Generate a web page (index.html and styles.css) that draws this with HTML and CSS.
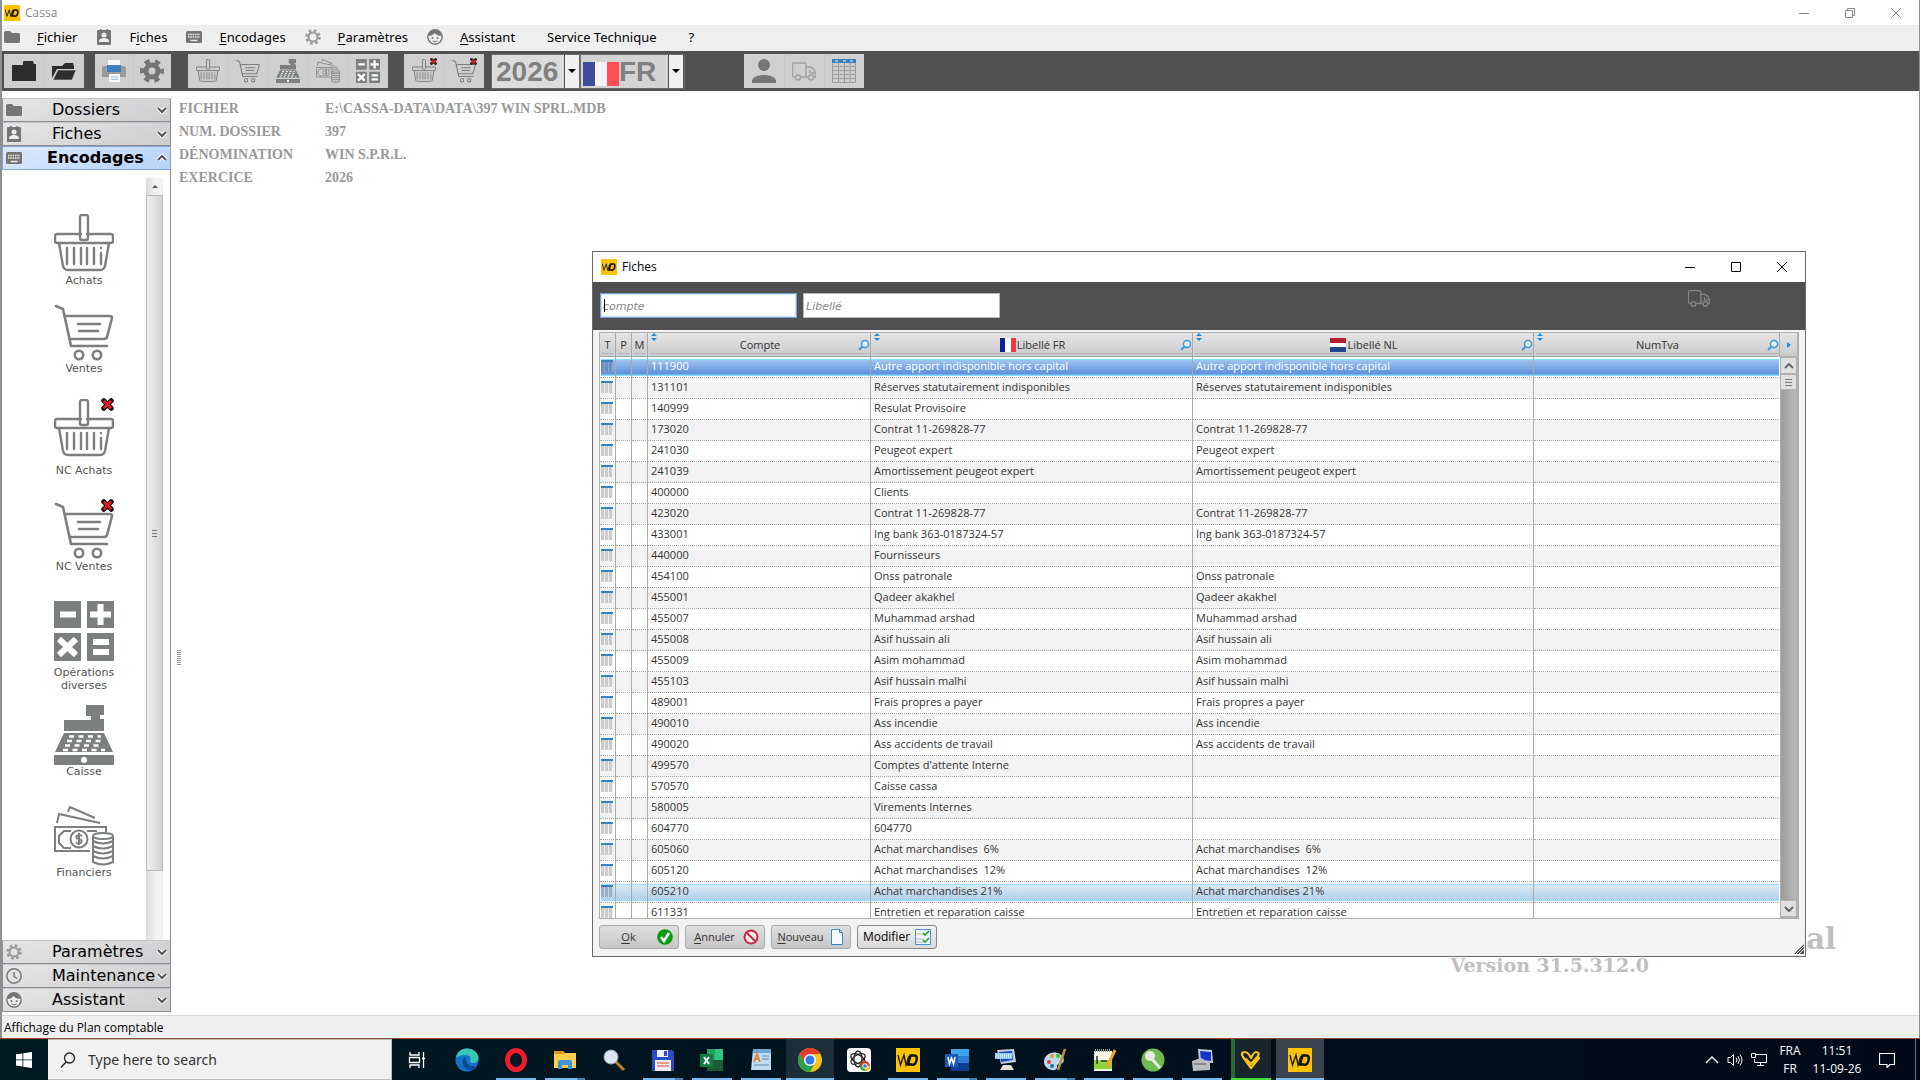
FILE: index.html
```html
<!DOCTYPE html>
<html lang="fr">
<head>
<meta charset="utf-8">
<title>Cassa</title>
<link rel="stylesheet" href="styles.css">
</head>
<body>
<svg class="defs" aria-hidden="true">
  <symbol id="folder" viewBox="0 0 16 16"><path d="M0 3.500a1.500 1.500 0 0 1 1.500-1.500h4.500l2 2h6.500a1.500 1.500 0 0 1 1.500 1.500v7a1.500 1.500 0 0 1-1.500 1.500h-13a1.500 1.500 0 0 1-1.500-1.500z" fill="#757575"/></symbol>
  <symbol id="contact" viewBox="0 0 16 16"><path d="M2 1h2v-1h1.500v1h5v-1h1.500v1h2a1 1 0 0 1 1 1v13a1 1 0 0 1-1 1h-12a1 1 0 0 1-1-1v-13a1 1 0 0 1 1-1z" fill="#757575"/><circle cx="8" cy="6" r="2.500" fill="#eee"/><path d="M3 13v-1c0-2 3-3 5-3s5 1 5 3v1z" fill="#eee"/></symbol>
  <symbol id="keyboard" viewBox="0 0 16 16"><rect y="2" width="16" height="12" rx="1.500" fill="#757575"/><path d="M2 5.500h12M2 8h12" stroke="#eee" stroke-width="1.500" stroke-dasharray="1.500 .8"/><path d="M4.500 11.500h7" stroke="#eee" stroke-width="1.500"/></symbol>
  <symbol id="cog" viewBox="0 0 16 16"><circle cx="8" cy="8" r="4.500" fill="none" stroke="#9a9a9a" stroke-width="2"/><circle cx="8" cy="8" r="6.500" fill="none" stroke="#9a9a9a" stroke-width="2.600" stroke-dasharray="2.600 2.500"/></symbol>
  <symbol id="face" viewBox="0 0 16 16"><circle cx="8" cy="8" r="7.200" fill="#eee" stroke="#757575" stroke-width="1.400"/><path d="M1.500 7c3 0 5-1.500 6-3 1.500 2 4 3 7 3l-1.500-4-5-2.500-5 2z" fill="#757575"/><circle cx="5.500" cy="9" r="1" fill="#757575"/><circle cx="10.500" cy="9" r="1" fill="#757575"/><path d="M5.500 12q2.500 1.500 5 0" stroke="#757575" fill="none"/></symbol>
  <symbol id="clock" viewBox="0 0 16 16"><circle cx="8" cy="8" r="7.200" fill="none" stroke="#757575" stroke-width="1.500"/><path d="M8 4v4.500l3 2" fill="none" stroke="#757575" stroke-width="1.500"/></symbol>
  <symbol id="basket" viewBox="0 0 60 60"><g fill="none" stroke="#7b807e" stroke-width="2.400" stroke-linejoin="round" stroke-linecap="round"><path d="M27 20h-24q-2 0-2 2v5q0 2 2 2h54q2 0 2-2v-5q0-2-2-2h-24"/><rect x="26" y="1" width="8" height="25" rx="2"/><path d="M5 29l4 23q1 4 5 4h32q4 0 5-4l4-23M13 34v16M20 34v16M27 34v16M33 34v16M40 34v16M47 39v11M47 34v.1"/></g></symbol>
  <symbol id="cart" viewBox="0 0 60 60"><g fill="none" stroke="#7b807e" stroke-width="2.600" stroke-linejoin="round" stroke-linecap="round"><path d="M2 4l7 3 8 37h36M11 14h45q2 0 2 2l-5 19q-.5 2-3 2H16M24 22h22M25 29h19"/><circle cx="25" cy="53" r="4.200"/><circle cx="43" cy="53" r="4.200"/></g></symbol>
  <symbol id="redx" viewBox="0 0 14 14"><path d="M3 3l8 8M11 3l-8 8" stroke="#111" stroke-width="5.500" stroke-linecap="round"/><path d="M3 3l8 8M11 3l-8 8" stroke="#e01b22" stroke-width="3"/></symbol>
  <symbol id="calc" viewBox="0 0 60 60"><path d="M0 0h27v27H0zM33 0h27v27H33zM0 32h27v28H0zM33 32h27v28H33z" fill="#7b807e"/><path d="M6 13.500h16M36 13.500h21M46.500 3v21M5 38l17 16M22 38l-17 16M39 41h16M39 51h16" stroke="#fff" stroke-width="6"/></symbol>
  <symbol id="register" viewBox="0 0 60 60"><path d="M32 0h18v10h-4v4h4v12H10V15h27v-4h-5zM10 28h40l9 19H1zM0 50h60v10H0z" fill="#7b807e"/><path d="M15 31.500h32M13 36h35M11 40.500h38M9 45h42" stroke="#fff" stroke-width="2.400" stroke-dasharray="5 4.500"/><circle cx="30" cy="55" r="3" fill="#fff"/></symbol>
  <symbol id="money" viewBox="0 0 60 60"><g fill="none" stroke="#7b807e" stroke-width="2"><path d="M3 17l2-9 41 9M14 6l2-5 25 11M52 26v-5H1v24h35M17 25h-7l-5 5v7l5 5h7M33 25h10"/><circle cx="25" cy="33" r="8.500"/><path d="M28 30q-3-2-5 0t2 3 2 3.500-5 0M25 27v12"/><ellipse cx="49" cy="30" rx="10" ry="3"/><path d="M39 30v26q10 5 20 0V30M39 35q10 5 20 0M39 40q10 5 20 0M39 45q10 5 20 0M39 50q10 5 20 0"/></g></symbol>
  <symbol id="case" viewBox="0 0 24 24"><path d="M11 3q0-1 1-1h9l1 3h2v17H0V6h11z" fill="#2d2d2d"/></symbol>
  <symbol id="open" viewBox="0 0 24 24"><path d="M0 7h10l3-3h8l1 3v3H5L0 19z" fill="#2d2d2d"/><path d="M6 11h18l-4 10H1z" fill="#2d2d2d" stroke="#cfcfcf" stroke-width=".6"/></symbol>
  <symbol id="printer" viewBox="0 0 24 24"><path d="M0 9q0-2 2-2h20q2 0 2 2v9H0z" fill="#9b9b9b"/><path d="M6 1h12v6H6zM7 15h11v8H7z" fill="#f7f7f7"/><path d="M5 6h14v7H5z" fill="#3d7ebd"/><path d="M9 18h7M9 20.500h7" stroke="#9fc2e4"/></symbol>
  <symbol id="gear" viewBox="0 0 24 24"><circle cx="12" cy="12" r="6" fill="none" stroke="#757575" stroke-width="5"/><circle cx="12" cy="12" r="9.800" fill="none" stroke="#757575" stroke-width="4.400" stroke-dasharray="5.130 5.130" stroke-dashoffset="2.500"/></symbol>
  <symbol id="user" viewBox="0 0 24 24"><circle cx="12" cy="6" r="6" fill="#757575"/><path d="M0 24v-2c1-8 23-8 24 0v2z" fill="#757575"/></symbol>
  <symbol id="truck" viewBox="0 0 24 24"><g fill="none" stroke="currentColor" stroke-width="1.400"><path d="M3.500 18H2q-1.500 0-1.500-1.500v-11Q.5 4 2 4h10.500Q14 4 14 5.500V18H9M14 8h4q4 1 5.500 6v4h-2M18 11v3h5M16 18h-2"/><circle cx="6" cy="18.500" r="2.500"/><circle cx="19" cy="18.500" r="2.500"/></g></symbol>
  <symbol id="sheet" viewBox="0 0 24 24"><path d="M.5 4v19.500h23V4M.5 7.500h23M.5 11.500h23M.5 15.500h23M.5 19.500h23M6.500 4v19M12.500 4v19M18 4v19" fill="none" stroke="#999"/><path d="M0 0h24v4H0z" fill="#3d7ebd"/><path d="M3 2h3M11 2h3M18 2h3" stroke="#dff"/></symbol>
  <symbol id="down" viewBox="0 0 12 8"><path d="M2 2l4 4 4-4" fill="none" stroke="#fff" stroke-width="4"/><path d="M2 2l4 4 4-4" fill="none" stroke="#555" stroke-width="2"/></symbol>
  <symbol id="wd" viewBox="0 0 24 24"><path d="M0 0h24v24H0z" fill="#fdc200"/><path d="M2 7l2.500 10L8 7l2 10 3-9" fill="none" stroke="#222" stroke-width="1.400"/><path d="M14.500 7.500h4q3 0 2 5t-5 4h-3.500z" fill="none" stroke="#111" stroke-width="2.500"/></symbol>
  <symbol id="lens" viewBox="0 0 12 12"><circle cx="7" cy="5" r="3.500" fill="#e6f4ff" stroke="#3a97dd" stroke-width="1.500"/><path d="M4.500 7.500L1 11" stroke="#3a97dd" stroke-width="2"/></symbol>
  <symbol id="sort" viewBox="0 0 8 8"><path d="M4 0l3 3H1zM4 8l3-3H1z" fill="#1f8fe0"/></symbol>
  <symbol id="min" viewBox="0 0 10 10"><path d="M0 5.500h10" stroke="currentColor"/></symbol>
  <symbol id="max" viewBox="0 0 10 10"><path d="M.5.500h9v9h-9z" fill="none" stroke="currentColor"/></symbol>
  <symbol id="restore" viewBox="0 0 10 10"><path d="M.5 2.500h7v7h-7zM2.500 2.500v-2h7v7h-2" fill="none" stroke="currentColor"/></symbol>
  <symbol id="close" viewBox="0 0 10 10"><path d="M0 0l10 10M10 0L0 10" stroke="currentColor"/></symbol>
  <symbol id="computer" viewBox="0 0 24 24"><path d="M3 2l17-1 2 13-15 2z" fill="#c9ced6"/><path d="M5 4l13-1 1 9-12 2z" fill="#1747c8"/><path d="M9 17h8l3 5H6z" fill="#e2e2dc"/></symbol>
</svg>

<div class="app">
  <header class="titlebar">
    <svg class="i16"><use href="#wd"/></svg><span class="title-text">Cassa</span>
    <div class="winctl"><button aria-label="Réduire"><svg><use href="#min"/></svg></button><button aria-label="Restaurer"><svg><use href="#restore"/></svg></button><button aria-label="Fermer"><svg><use href="#close"/></svg></button></div>
  </header>

  <nav class="menubar">
    <a href="#"><svg class="i16"><use href="#folder"/></svg><span><u>F</u>ichier</span></a>
    <a href="#"><svg class="i16"><use href="#contact"/></svg><span>F<u>i</u>ches</span></a>
    <a href="#"><svg class="i16"><use href="#keyboard"/></svg><span><u>E</u>ncodages</span></a>
    <a href="#"><svg class="i16"><use href="#cog"/></svg><span><u>P</u>aramètres</span></a>
    <a href="#"><svg class="i16"><use href="#face"/></svg><span><u>A</u>ssistant</span></a>
    <a href="#" class="plain">Service Technique</a>
    <a href="#" class="plain">?</a>
  </nav>

  <div class="toolbar">
    <div class="group g-files"><button aria-label="Nouveau dossier"><svg><use href="#case"/></svg></button><button aria-label="Ouvrir"><svg><use href="#open"/></svg></button></div>
    <div class="group g-print"><button aria-label="Imprimer"><svg><use href="#printer"/></svg></button><button aria-label="Réglages"><svg><use href="#gear"/></svg></button></div>
    <div class="group g-entry"><button aria-label="Achats"><svg><use href="#basket"/></svg></button><button aria-label="Ventes"><svg><use href="#cart"/></svg></button><button aria-label="Caisse"><svg><use href="#register"/></svg></button><button aria-label="Financiers"><svg><use href="#money"/></svg></button><button aria-label="Opérations diverses"><svg><use href="#calc"/></svg></button></div>
    <div class="group g-credit"><button aria-label="NC Achats"><svg><use href="#basket"/></svg><svg class="mini-x"><use href="#redx"/></svg></button><button aria-label="NC Ventes"><svg><use href="#cart"/></svg><svg class="mini-x"><use href="#redx"/></svg></button></div>
    <div class="combo year"><select aria-label="Exercice"><option>2026</option></select><span class="arrow"></span></div>
    <div class="combo lang"><select aria-label="Langue"><option>FR</option></select><span class="arrow"></span></div>
    <div class="group g-cards"><button aria-label="Clients"><svg><use href="#user"/></svg></button><button class="pale" aria-label="Fournisseurs"><svg><use href="#truck"/></svg></button><button aria-label="Plan comptable"><svg><use href="#sheet"/></svg></button></div>
  </div>

  <main class="workspace">
    <aside class="sidebar">
      <button class="section"><svg class="i16"><use href="#folder"/></svg><span>Dossiers</span><svg class="chev"><use href="#down"/></svg></button>
      <button class="section"><svg class="i16"><use href="#contact"/></svg><span>Fiches</span><svg class="chev"><use href="#down"/></svg></button>
      <button class="section active"><svg class="i16"><use href="#keyboard"/></svg><span>Encodages</span><svg class="chev up"><use href="#down"/></svg></button>
      <div class="panel">
        <ul class="shortcuts">
          <li><a href="#"><svg><use href="#basket"/></svg>Achats</a></li>
          <li><a href="#"><svg><use href="#cart"/></svg>Ventes</a></li>
          <li><a href="#" class="spaced"><svg><use href="#basket"/></svg>NC Achats<svg class="badge"><use href="#redx"/></svg></a></li>
          <li><a href="#"><svg><use href="#cart"/></svg>NC Ventes<svg class="badge"><use href="#redx"/></svg></a></li>
          <li><a href="#" class="spaced"><svg><use href="#calc"/></svg>Opérations<br>diverses</a></li>
          <li><a href="#"><svg><use href="#register"/></svg>Caisse</a></li>
          <li><a href="#"><svg><use href="#money"/></svg>Financiers</a></li>
        </ul>
        <div class="side-scroll"><span class="tri"></span><span class="thumb"><i></i></span></div>
      </div>
      <button class="section"><svg class="i16"><use href="#cog"/></svg><span>Paramètres</span><svg class="chev"><use href="#down"/></svg></button>
      <button class="section"><svg class="i16"><use href="#clock"/></svg><span>Maintenance</span><svg class="chev"><use href="#down"/></svg></button>
      <button class="section"><svg class="i16"><use href="#face"/></svg><span>Assistant</span><svg class="chev"><use href="#down"/></svg></button>
    </aside>
    <div class="splitter"><i></i></div>
    <section class="content">
      <dl class="info">
        <dt>FICHIER</dt><dd>E:\CASSA-DATA\DATA\397 WIN SPRL.MDB</dd>
        <dt>NUM. DOSSIER</dt><dd>397</dd>
        <dt>DÉNOMINATION</dt><dd>WIN S.P.R.L.</dd>
        <dt>EXERCICE</dt><dd>2026</dd>
      </dl>
      <div class="brand"><div class="brand-name">al</div><div class="brand-version">Version 31.5.312.0</div></div>
    </section>
  </main>
  <footer class="status">Affichage du Plan comptable</footer>
</div>

<div class="taskbar">
  <button class="start" aria-label="Start"><svg viewBox="0 0 16 16"><path d="M0 2.300l6.500-.9v6.100H0zM7.300 1.300L16 0v7.500H7.300zM0 8.300h6.500v6.200L0 13.600zM7.300 8.300H16V16l-8.700-1.300z" fill="#fff"/></svg></button>
  <label class="search"><svg viewBox="0 0 16 16"><circle cx="9.500" cy="6" r="5" fill="none" stroke="#222" stroke-width="1.300"/><path d="M6 10l-5 5.500" stroke="#222" stroke-width="1.300"/></svg><input type="text" placeholder="Type here to search" aria-label="Search"></label>
  <div class="tasks">
    <button aria-label="Task view"><svg viewBox="0 0 24 24"><path d="M5 4v3h9V4M5 20v-3h9v3M4.500 9.500h10v5h-10zM18.500 4v16M17 10.500h3" fill="none" stroke="#fff" stroke-width="1.300"/></svg></button>
    <button aria-label="Edge"><svg viewBox="0 0 24 24"><circle cx="12" cy="12" r="11.500" fill="#1472c9"/><path d="M1 10C2 3 7 .5 12 .5c7 0 11.500 5 11.500 9.500 0 5-6 6-8.500 4 2-5-1-7-5-7S2 9 1 10z" fill="#36c6b4"/><path d="M10 9c-6 5-1 13 6 13 3 0 6-3 6-4-6 2-11-1-12-9z" fill="#0d4a94"/></svg></button>
    <button class="run" aria-label="Opera"><svg viewBox="0 0 24 24"><ellipse cx="12" cy="12" rx="8.500" ry="9.500" fill="none" stroke="#ee1c2e" stroke-width="5"/></svg></button>
    <button class="run multi" aria-label="Explorer"><svg viewBox="0 0 24 24"><path d="M1 3h9l2 2h11v15H1z" fill="#ffcf4d"/><path d="M1 3h9l2 3H1z" fill="#dc9b12"/><path d="M5 21v-7q0-2 2-2h10q2 0 2 2v7h-4v-4H9v4z" fill="#3a94dd"/></svg></button>
    <button aria-label="Magnifier"><svg viewBox="0 0 24 24"><path d="M13 13l9 9" stroke="#c07a36" stroke-width="3"/><circle cx="9" cy="9" r="7" fill="#dce4f6" stroke="#9aa6c4"/></svg></button>
    <button class="run multi" aria-label="Save"><svg viewBox="0 0 24 24"><path d="M1 2h20l2 2v19H1z" fill="#2b4cc4"/><path d="M6 2h11v7H6zM4 12h16v11H4z" fill="#eee"/><path d="M13 3h3v5h-3z" fill="#2b4cc4"/><path d="M6 15h12M6 18h12" stroke="#d44"/></svg></button>
    <button class="run" aria-label="Excel"><svg viewBox="0 0 24 24"><path d="M7 1h16v22H7z" fill="#21a366"/><path d="M15 1h8v11h-8z" fill="#33c481"/><path d="M7 12h16v11H7z" fill="#185c37"/><path d="M0 6h13v13H0z" fill="#107c41"/><path d="M4 9l5 7M9 9l-5 7" stroke="#fff" stroke-width="2"/></svg></button>
    <button class="run" aria-label="WordPad"><svg viewBox="0 0 24 24"><path d="M4 1h18v21H2z" fill="#bfdcf0"/><path d="M4 1h18v4H4z" fill="#6ea6cf"/><path d="M5 14l3-8 3 8M6 11h4" fill="none" stroke="#e07a20" stroke-width="1.600"/><path d="M13 8h7M13 11h7M5 17h15" stroke="#5e8cb0"/></svg></button>
    <button class="run full" aria-label="Chrome"><svg viewBox="0 0 24 24"><circle cx="12" cy="12" r="12" fill="#fbc116"/><path d="M1.600 6a12 12 0 0 1 20.800 0H12L7 15z" fill="#e33b2e"/><path d="M1.600 6a12 12 0 0 0 10.400 18l5-9H7z" fill="#2ba24c"/><circle cx="12" cy="12" r="6" fill="#fff"/><circle cx="12" cy="12" r="4.500" fill="#2f7de9"/></svg></button>
    <button aria-label="ChatGPT"><svg viewBox="0 0 24 24"><rect width="24" height="24" rx="4" fill="#fff"/><g fill="none" stroke="#222" stroke-width="1.300"><ellipse cx="11" cy="11" rx="4" ry="8"/><ellipse cx="11" cy="11" rx="4" ry="8" transform="rotate(60 11 11)"/><ellipse cx="11" cy="11" rx="4" ry="8" transform="rotate(120 11 11)"/></g><circle cx="18" cy="18" r="5" fill="#e33b2e"/><path d="M14 21a5 5 0 0 0 9-3h-5z" fill="#fbc116"/><path d="M13 17a5 5 0 0 0 5 6v-4z" fill="#2ba24c"/><circle cx="18" cy="18" r="2.300" fill="#2f7de9" stroke="#fff"/></svg></button>
    <button class="run" aria-label="WinDev"><svg><use href="#wd"/></svg></button>
    <button class="run multi" aria-label="Word"><svg viewBox="0 0 24 24"><path d="M6 1h18v22H6z" fill="#2b7cd3"/><path d="M6 1h18v7H6z" fill="#41a5ee"/><path d="M6 15h18v8H6z" fill="#103f91"/><path d="M0 6h13v13H0z" fill="#185abd"/><path d="M3 9l1.500 7 2-6 2 6L10 9" fill="none" stroke="#fff" stroke-width="1.500"/></svg></button>
    <button class="run" aria-label="Remote keyboard"><svg viewBox="0 0 24 24"><use href="#computer"/><path d="M1 5h17v6H1z" fill="#8fc8f2"/><path d="M2 7h15M2 9h15" stroke="#fff" stroke-dasharray="1 1"/></svg></button>
    <button class="run multi" aria-label="Paint"><svg viewBox="0 0 24 24"><path d="M1 14C1 6 10 2 17 6c6 4 4 9 1 10-3 0-4 0-4 3 0 6-13 3-13-5z" fill="#b9dbf0"/><circle cx="6" cy="14" r="2" fill="#e33"/><circle cx="9" cy="8" r="2" fill="#e9a020"/><circle cx="15" cy="8" r="2" fill="#3b3"/><circle cx="9" cy="18" r="2" fill="#26c"/><path d="M22 1l-7 21" stroke="#c98a3a" stroke-width="2.500"/></svg></button>
    <button class="run" aria-label="Notepad"><svg viewBox="0 0 24 24"><path d="M2 3h18v20H2z" fill="#f6f6ea"/><path d="M2 12h18v9H2z" fill="#8ed43c"/><path d="M5 8v8M9 13h6" stroke="#333" stroke-width="1.500"/><path d="M3 2.500h16" stroke="#999" stroke-width="3" stroke-dasharray="1 1"/><path d="M23 2l-8 17" stroke="#f0a61e" stroke-width="3"/></svg></button>
    <button class="run" aria-label="Connection"><svg viewBox="0 0 24 24"><circle cx="12" cy="12" r="11.500" fill="#6cba52"/><circle cx="9" cy="8" r="5" fill="#e6ebe4"/><path d="M11 11l8 9" stroke="#e6ebe4" stroke-width="3"/></svg></button>
    <button class="run" aria-label="Remote desktop"><svg viewBox="0 0 24 24"><path d="M8 1l14 1 1 13-14-1z" fill="#c9ced6"/><path d="M10 3l11 1v9l-10-1z" fill="#1734c8"/><path d="M2 13l9-3 9 5v7l-17 1z" fill="#b8bdc4"/><path d="M4 16h12" stroke="#555"/></svg></button>
    <button class="run green" aria-label="Heart"><svg viewBox="0 0 24 24"><path d="M7 11l5 5 7-8q2-4-2-4-2 0-5 6M12 10Q9 4 6 4 1 4 4 9l8 11 8-10" fill="none" stroke="#fdc21a" stroke-width="2.200" stroke-linecap="round" stroke-linejoin="round"/></svg></button>
    <button class="run full current" aria-label="WinDev application"><svg><use href="#wd"/></svg></button>
  </div>
  <div class="tray">
    <svg class="i14" viewBox="0 0 14 14"><path d="M1 10l6-6 6 6" fill="none" stroke="#fff" stroke-width="1.400"/></svg>
    <svg class="i16" viewBox="0 0 16 16"><path d="M1 5.500h2.500l3-3v11l-3-3H1zM9 5.500q2 2.500 0 5M11 4q3 4 0 8M13 2.500q4 5.500 0 11" fill="none" stroke="#fff"/></svg>
    <svg class="i16" viewBox="0 0 16 16"><path d="M4 2.500h11.500v8H3.500V7M9.500 10.500v3M6 13.500h7M.5 1.500h4v4h-4z" fill="none" stroke="#fff"/></svg>
    <div class="stack locale"><span>FRA</span><span>FR</span></div>
    <div class="stack clock"><span>11:51</span><span>11-09-26</span></div>
    <svg class="i16 note" viewBox="0 0 16 16"><path d="M.5 1.500h15v11H11l-3 3v-3H.5z" fill="none" stroke="#fff" stroke-width="1.200"/></svg>
    <span class="peek"></span>
  </div>
</div>

<section class="dialog" aria-label="Fiches">
  <header class="dialog-title">
    <svg class="i16"><use href="#wd"/></svg><span>Fiches</span>
    <div class="winctl"><button aria-label="Réduire"><svg><use href="#min"/></svg></button><button aria-label="Agrandir"><svg><use href="#max"/></svg></button><button aria-label="Fermer"><svg><use href="#close"/></svg></button></div>
  </header>
  <div class="filters">
    <div class="field focused"><input type="text" placeholder="compte" aria-label="compte"><i class="caret"></i></div>
    <div class="field"><input type="text" placeholder="Libellé" aria-label="Libellé"></div>
    <svg class="filter-truck"><use href="#truck"/></svg>
  </div>
  <div class="grid">
    <div class="grid-view">
      <table>
        <colgroup><col class="c-flag"><col class="c-flag"><col class="c-flag"><col class="c-account"><col class="c-fr"><col class="c-nl"><col></colgroup>
        <thead>
          <tr>
            <th><div class="hd tiny"><span>T</span></div></th><th><div class="hd tiny"><span>P</span></div></th><th><div class="hd tiny"><span>M</span></div></th>
            <th><div class="hd"><svg class="sort"><use href="#sort"/></svg><span>Compte</span><svg class="lens"><use href="#lens"/></svg></div></th>
            <th><div class="hd"><svg class="sort"><use href="#sort"/></svg><span><i class="flag fr"></i>Libellé FR</span><svg class="lens"><use href="#lens"/></svg></div></th>
            <th><div class="hd"><svg class="sort"><use href="#sort"/></svg><span><i class="flag nl"></i>Libellé NL</span><svg class="lens"><use href="#lens"/></svg></div></th>
            <th><div class="hd"><svg class="sort"><use href="#sort"/></svg><span>NumTva</span><svg class="lens"><use href="#lens"/></svg></div></th>
          </tr>
        </thead>
        <tbody>
          <tr class="selected"><td><td><td><td>111900<td>Autre apport indisponible hors capital<td>Autre apport indisponible hors capital<td>
          <tr><td><td><td><td>131101<td>Réserves statutairement indisponibles<td>Réserves statutairement indisponibles<td>
          <tr><td><td><td><td>140999<td>Resulat Provisoire<td><td>
          <tr><td><td><td><td>173020<td>Contrat 11-269828-77<td>Contrat 11-269828-77<td>
          <tr><td><td><td><td>241030<td>Peugeot expert<td>Peugeot expert<td>
          <tr><td><td><td><td>241039<td>Amortissement peugeot expert<td>Amortissement peugeot expert<td>
          <tr><td><td><td><td>400000<td>Clients<td><td>
          <tr><td><td><td><td>423020<td>Contrat 11-269828-77<td>Contrat 11-269828-77<td>
          <tr><td><td><td><td>433001<td>Ing bank 363-0187324-57<td>Ing bank 363-0187324-57<td>
          <tr><td><td><td><td>440000<td>Fournisseurs<td><td>
          <tr><td><td><td><td>454100<td>Onss patronale<td>Onss patronale<td>
          <tr><td><td><td><td>455001<td>Qadeer akakhel<td>Qadeer akakhel<td>
          <tr><td><td><td><td>455007<td>Muhammad arshad<td>Muhammad arshad<td>
          <tr><td><td><td><td>455008<td>Asif hussain ali<td>Asif hussain ali<td>
          <tr><td><td><td><td>455009<td>Asim mohammad<td>Asim mohammad<td>
          <tr><td><td><td><td>455103<td>Asif hussain malhi<td>Asif hussain malhi<td>
          <tr><td><td><td><td>489001<td>Frais propres a payer<td>Frais propres a payer<td>
          <tr><td><td><td><td>490010<td>Ass incendie<td>Ass incendie<td>
          <tr><td><td><td><td>490020<td>Ass accidents de travail<td>Ass accidents de travail<td>
          <tr><td><td><td><td>499570<td>Comptes d'attente Interne<td><td>
          <tr><td><td><td><td>570570<td>Caisse cassa<td><td>
          <tr><td><td><td><td>580005<td>Virements Internes<td><td>
          <tr><td><td><td><td>604770<td>604770<td><td>
          <tr><td><td><td><td>605060<td>Achat marchandises&nbsp; 6%<td>Achat marchandises&nbsp; 6%<td>
          <tr><td><td><td><td>605120<td>Achat marchandises&nbsp; 12%<td>Achat marchandises&nbsp; 12%<td>
          <tr class="hover"><td><td><td><td>605210<td>Achat marchandises 21%<td>Achat marchandises 21%<td>
          <tr><td><td><td><td>611331<td>Entretien et reparation caisse<td>Entretien et reparation caisse<td>
        </tbody>
      </table>
    </div>
    <div class="grid-scroll">
      <span class="more"></span>
      <span class="sb"><svg class="flip" viewBox="0 0 10 6"><path d="M1 1l4 4 4-4" fill="none" stroke="#666" stroke-width="2"/></svg></span>
      <span class="sb knob"><i></i></span>
      <span class="rail"></span>
      <span class="sb"><svg viewBox="0 0 10 6"><path d="M1 1l4 4 4-4" fill="none" stroke="#666" stroke-width="2"/></svg></span>
    </div>
  </div>
  <footer class="actions">
    <button><span><u>O</u>k</span><svg viewBox="0 0 16 16"><circle cx="8" cy="8" r="7.800" fill="#0a9a0f"/><path d="M4 8l3 4 5-8" fill="none" stroke="#fff" stroke-width="2.500"/></svg></button>
    <button><span><u>A</u>nnuler</span><svg viewBox="0 0 16 16"><circle cx="8" cy="8" r="6.500" fill="#eee" stroke="#d22445" stroke-width="2"/><path d="M3.500 3.500l9 9" stroke="#d22445" stroke-width="2"/></svg></button>
    <button><span><u>N</u>ouveau</span><svg viewBox="0 0 16 16"><path d="M2.500.500h8l3 3v12h-11z" fill="#f6fbff" stroke="#3d86bd"/><path d="M10.500.500v3h3" fill="none" stroke="#3d86bd"/></svg></button>
    <button class="primary"><span>Modifier</span><svg viewBox="0 0 16 16"><path d="M.5.500h15v15H.5z" fill="#eef5fb" stroke="#4a93c8"/><path d="M1 5h8M1 10h8M1 13h8" stroke="#bbb"/><path d="M8 4l2 2 4-4M8 11l2 2 4-4" fill="none" stroke="#28a428" stroke-width="1.600"/></svg></button>
    <svg class="resize" viewBox="0 0 10 10"><path d="M10 0v10H0z" fill="#555"/><path d="M2 10l8-8M5 10l5-5" stroke="#f3f3f3"/></svg>
  </footer>
</section>
</body>
</html>
```
FILE: styles.css
```css
* { box-sizing: border-box; }
body {
  margin: 0;
  height: 100vh;
  display: flex;
  flex-direction: column;
  overflow: hidden;
  background: #fff;
  color: #000;
  font: 12px/16px "Open Sans", "Noto Sans", sans-serif;
}
button { padding: 0; border: 0; background: none; font: inherit; color: inherit; }
a { color: inherit; text-decoration: none; }
.defs { display: none; }
.i16 { width: 16px; height: 16px; flex: none; }
.i14 { width: 14px; height: 14px; flex: none; }

.app {
  flex: 1;
  min-height: 0;
  display: flex;
  flex-direction: column;
  border: solid #8f8f96;
  border-width: 0 1px 0 2px;
}
.titlebar { height: 25px; flex: none; display: flex; align-items: center; gap: 5px; padding-left: 2px; color: #888; }
.winctl { display: flex; margin-left: auto; }
.winctl button { width: 46px; height: 24px; display: grid; place-items: center; }
.winctl svg { width: 10px; height: 10px; }

.menubar { height: 26px; flex: none; display: flex; align-items: center; gap: 19px; padding: 0 0 2px 2px; background: #efefef; font-family: "Noto Sans", sans-serif; font-size: 13px; }
.menubar a { display: flex; align-items: center; gap: 17px; white-space: nowrap; }
.menubar .plain { padding-left: 13px; }
u { text-underline-offset: 2px; }

.toolbar { height: 40px; flex: none; display: flex; align-items: center; padding-left: 2px; background: #505050; }
.group { display: flex; height: 34px; background: #cfcfcf; }
.group button { width: 40px; display: grid; place-items: center; position: relative; }
.group button + button { box-shadow: inset 1px 0 #cacaca; }
.group svg { width: 24px; height: 24px; }
.group .mini-x { position: absolute; width: 7px; height: 7px; right: 7px; top: 4px; }
.group .pale { color: #a3a3a3; }
.g-files { margin-right: 11px; }
.g-print { margin-right: 17px; }
.g-print button { width: 38px; }
.g-entry { margin-right: 16px; }
.g-credit { margin-right: 7px; }
.g-cards { margin-left: 59px; }
.combo { display: flex; height: 35px; border: 1px solid #6b6b6b; background: #505050; }
.combo select {
  appearance: none;
  border: 0;
  border-radius: 0;
  padding: 0 0 0 4px;
  background: #dcdcdc;
  color: #808080;
  font: bold 28px/33px "Liberation Sans", sans-serif;
}
.year select { width: 72px; }
.lang select {
  width: 87px;
  padding-left: 38px;
  background: linear-gradient(90deg, #424a9c 12px, #f4f4f4 12px 24px, #ff4d58 24px) 2px 7px / 36px 24px no-repeat #d3d3d3;
}
.combo .arrow { width: 14px; margin: 0 1px; background: #f0f0f0; display: grid; place-items: center; }
.year .arrow { margin-right: 0; }
.combo .arrow::after { content: ""; border: 4px solid transparent; border-top-color: #000; border-bottom: 0; }

.workspace { flex: 1; min-height: 0; display: flex; }
.sidebar { width: 169px; flex: none; display: flex; flex-direction: column; padding: 7px 0 3px; }
.section {
  height: 24px;
  flex: none;
  display: flex;
  align-items: center;
  padding: 0 2px 0 3px;
  border: 1px solid #8c8c94;
  border-top-color: #c4c4c8;
  background: linear-gradient(160deg, #e6e6e6, #cdcdcf);
  font: 16px/20px "DejaVu Sans", sans-serif;
  text-align: left;
}
.section span { flex: 1; padding-left: 30px; white-space: nowrap; width: 0; }
.section.active { background: linear-gradient(160deg, #dcebff, #b6d2f8); border-color: #86a5d4; font-weight: bold; }
.section.active span { padding-left: 25px; }
.chev { width: 12px; height: 8px; flex: none; }
.up, .flip { transform: rotate(180deg); }
.panel { flex: 1; min-height: 0; display: flex; border-right: 1px solid #8c8c94; }
.shortcuts {
  flex: 1;
  margin: 0;
  padding: 44px 0 0 20px;
  list-style: none;
  display: grid;
  grid-template-rows: 88px 97px 101px 101px 104px 101px auto;
  color: #555;
  font: 11px/13px "DejaVu Sans", sans-serif;
  text-align: center;
}
.shortcuts a { position: relative; width: 64px; margin: 0 auto; display: block; white-space: nowrap; }
.shortcuts svg { display: block; width: 60px; height: 60px; margin: 0 auto; }
.shortcuts .spaced > svg:first-child { margin-bottom: 5px; }
.shortcuts .badge { position: absolute; width: 13px; height: 13px; right: 2px; top: -1px; }
.side-scroll { width: 17px; margin: 8px 7px 0 0; display: flex; flex-direction: column; background: linear-gradient(90deg, #dcdcdc, #f2f2f2 60%); padding-bottom: 69px; }
.side-scroll .tri { height: 17px; display: grid; place-items: center; }
.side-scroll .tri::after { content: ""; border: 3px solid transparent; border-bottom-color: #555; border-top: 0; }
.side-scroll .thumb { flex: 1; border: 1px solid #bbb; background: linear-gradient(90deg, #eee, #d3d4d6); display: grid; place-items: center; }
.thumb i { width: 5px; height: 7px; background: repeating-linear-gradient(#777 0 1px, transparent 1px 3px); }
.splitter { width: 6px; flex: none; display: grid; align-items: center; padding: 210px 0 0 6px; }
.splitter i { width: 4px; height: 16px; background: repeating-linear-gradient(#999 0 1px, transparent 1px 2px); }
.content { flex: 1; display: flex; flex-direction: column; justify-content: space-between; }
.info {
  margin: 0;
  padding: 6px 0 0 2px;
  display: grid;
  grid-template-columns: 146px auto;
  grid-auto-rows: 23px;
  color: #999;
  font: bold 14px/23px "Liberation Serif", serif;
}
.info dd { margin: 0; }
.brand { color: #c0c0c0; font-family: "DejaVu Serif", serif; font-weight: bold; padding: 0 83px 40px 0; display: grid; justify-items: end; }
.brand-name { font-size: 29px; line-height: 32px; }
.brand-version { font-size: 19px; line-height: 20px; padding-right: 187px; }
.status { height: 23px; flex: none; padding-left: 2px; background: #f0f0f0; border-top: 1px solid #d7d7d7; line-height: 24px; }

.taskbar {
  height: 42px;
  flex: none;
  display: flex;
  border-top: 1px solid #8a5030;
  background: linear-gradient(90deg, #001a22, #000a1a);
  color: #fff;
}
.taskbar button { display: grid; place-items: center; }
.start { width: 48px; }
.start svg { width: 16px; height: 16px; }
.search { width: 344px; display: flex; align-items: center; gap: 12px; padding-left: 12px; background: #f1f1f1; border: 1px solid #bbb; border-left: 0; }
.search svg { width: 16px; height: 16px; }
.search input { flex: 1; width: 0; padding: 0; border: 0; background: none; font: 14px/20px "Noto Sans", sans-serif; }
.search input::placeholder { color: #333; opacity: 1; }
.tasks { display: grid; grid-auto-flow: column; grid-auto-columns: 48px; column-gap: 1px; margin-left: 2px; }
.tasks button:first-child { margin-right: 3px; }
.tasks svg { width: 24px; height: 24px; }
.run { position: relative; }
.run::after { content: ""; position: absolute; left: 4px; right: 4px; bottom: 0; height: 2px; background: #76b9ed; }
.multi::after { background: linear-gradient(90deg, #76b9ed 32px, #4a80b0 32px); }
.full::after { left: 0; right: 0; }
.full { background: #1c2f38; }
.current { background: #3a434e; }
.green { margin: 0 4px; box-shadow: inset 4px 0 #2a6a34; background: #16262c; }
.green::after { left: 0; right: 0; background: #3edb35; }
.tray { margin-left: auto; display: flex; align-items: center; gap: 8px; }
.stack { display: grid; text-align: center; font-size: 12px; line-height: 18px; }
.locale { width: 24px; margin: 0 2px 0 3px; }
.clock { width: 50px; }
.note { margin: 0 12px 0 9px; }
.peek { width: 5px; height: 41px; border-left: 1px solid #6a727c; }

.dialog {
  position: absolute;
  top: 251px;
  right: 114px;
  bottom: 123px;
  left: 592px;
  display: flex;
  flex-direction: column;
  border: 1px solid #6b6b6b;
  background: #f3f3f3;
}
.dialog-title { height: 30px; flex: none; display: flex; align-items: center; gap: 5px; padding-left: 8px; background: #fff; }
.filters { height: 48px; flex: none; display: flex; gap: 6px; padding: 11px 95px 12px 7px; background: #505050; }
.field { position: relative; width: 197px; height: 25px; }
.field input { width: 100%; height: 100%; padding: 1px 2px 0; border: 1px solid #bbb; border-radius: 0; background: #fff; font: italic 11px/20px "DejaVu Sans", sans-serif; }
.field.focused input { border-color: #7da2d9; box-shadow: inset 0 0 0 1px #cfe1fa; }
.field input::placeholder { color: #888; opacity: 1; }
.caret { position: absolute; left: 4px; top: 6px; width: 1px; height: 13px; background: #000; }
.filter-truck { width: 22px; height: 22px; margin: -6px 0 0 auto; color: #858585; }

.grid { flex: 1; min-height: 0; margin: 2px 6px 0; display: flex; border: 1px solid #b0b0b0; }
.grid-view { flex: 1; overflow: hidden; background: #fff; }
table { width: 100%; table-layout: fixed; border-collapse: separate; border-spacing: 0; color: #333; font-size: 11px; line-height: 18px; }
.c-flag { width: 16px; }
.c-account { width: 223px; }
.c-fr { width: 322px; }
.c-nl { width: 341px; }
th { height: 24px; padding: 0 0 2px 2px; font-weight: normal; line-height: 14px; border-right: 1px solid #aaa; border-bottom: 1px solid #aaa; background: linear-gradient(#e4e4e4, #cbcbcb); }
.hd { height: 21px; display: grid; grid-template-columns: 12px 1fr 12px; align-items: center; border-bottom: 1px solid #b2b2b2; }
.hd.tiny { grid-template-columns: 1fr; margin-right: 2px; }
.hd span { display: flex; align-items: center; justify-content: center; margin-top: 4px; }
.sort { width: 8px; height: 8px; align-self: start; }
.lens { width: 12px; height: 12px; margin-top: 4px; }
.flag { width: 16px; height: 14px; margin-right: 1px; }
.fr { background: linear-gradient(90deg, #0b1fa0 5px, #fff 5px 11px, #f03a4a 11px); }
.nl { background: linear-gradient(#b0202e 5px, #fff 5px 9px, #21468b 9px); }
td { height: 21px; padding: 0 0 2px 3px; white-space: nowrap; overflow: hidden; border-right: 1px solid #aaa; border-bottom: 1px dotted #aaa; }
td:last-child { border-right-color: #fff; }
tbody tr:nth-child(even) { background: #f3f3f3; }
td:first-child {
  background:
    linear-gradient(#3d7ebd, #3d7ebd) 1px 3px / 12px 2px no-repeat,
    repeating-linear-gradient(90deg, #ccc 0 3px, #eee 3px 4px) 1px 5px / 12px 10px no-repeat;
}
.selected { color: #fff; }
.selected td { background: linear-gradient(#86dcff 1px, #9ec6ef 1px, #5f8edc 15px, #86dcff 16px) 0 2px / 100% 17px no-repeat; }
.hover td { background: linear-gradient(#9adcfa 1px, #daeaf6 1px, #b3d1ea 15px, #9adcfa 16px) 0 2px / 100% 17px no-repeat; }
tbody .selected td:first-child {
  background:
    linear-gradient(#3d7ebd, #3d7ebd) 1px 3px / 12px 2px no-repeat,
    repeating-linear-gradient(90deg, #6b8fc4 0 3px, #86a9da 3px 4px) 1px 5px / 12px 10px no-repeat,
    linear-gradient(#86dcff 1px, #9ec6ef 1px, #5f8edc 15px, #86dcff 16px) 1px 2px / 100% 17px no-repeat;
}
tbody .hover td:first-child {
  background:
    linear-gradient(#3d7ebd, #3d7ebd) 1px 3px / 12px 2px no-repeat,
    repeating-linear-gradient(90deg, #95aec4 0 3px, #c3d6e6 3px 4px) 1px 5px / 12px 10px no-repeat,
    linear-gradient(#9adcfa 1px, #daeaf6 1px, #b3d1ea 15px, #9adcfa 16px) 1px 2px / 100% 17px no-repeat;
}
.grid-scroll { width: 18px; display: flex; flex-direction: column; background: #b0b0b0; padding-right: 2px; }
.more { height: 23px; margin-bottom: 2px; margin-right: -1px; display: grid; place-items: center; background: linear-gradient(#e4e4e4, #cbcbcb); }
.more::after { content: ""; border: 3px solid transparent; border-left: 4px solid #1f8fe0; border-right: 0; }
.sb { height: 15px; margin: 0 0 2px 1px; display: grid; place-items: center; background: #e0e0e0; }
.sb svg { width: 10px; height: 6px; }
.knob { height: 14px; margin-bottom: 1px; }
.knob i { width: 7px; height: 7px; background: repeating-linear-gradient(#777 0 1px, transparent 1px 3px); }
.rail { flex: 1; margin: 0 0 1px 1px; background: linear-gradient(90deg, #9c9c9c, #b8b8b8); }

.actions { height: 37px; flex: none; display: flex; align-items: flex-start; gap: 6px; padding: 6px 1px 0 6px; }
.actions button {
  width: 80px;
  height: 24px;
  display: flex;
  align-items: center;
  padding-right: 5px;
  border: 1px solid #aaa;
  border-radius: 3px;
  background: linear-gradient(#dedede, #c6c6c6);
  color: #333;
  font-size: 11px;
}
.actions button span { flex: 1; text-align: center; }
.actions button svg { width: 16px; height: 16px; }
.actions .primary { border-color: #888; background: linear-gradient(#f4f4f4, #d8d8d8); color: #000; font-size: 12px; }
.resize { width: 10px; height: 10px; margin: auto 0 2px auto; }
```
